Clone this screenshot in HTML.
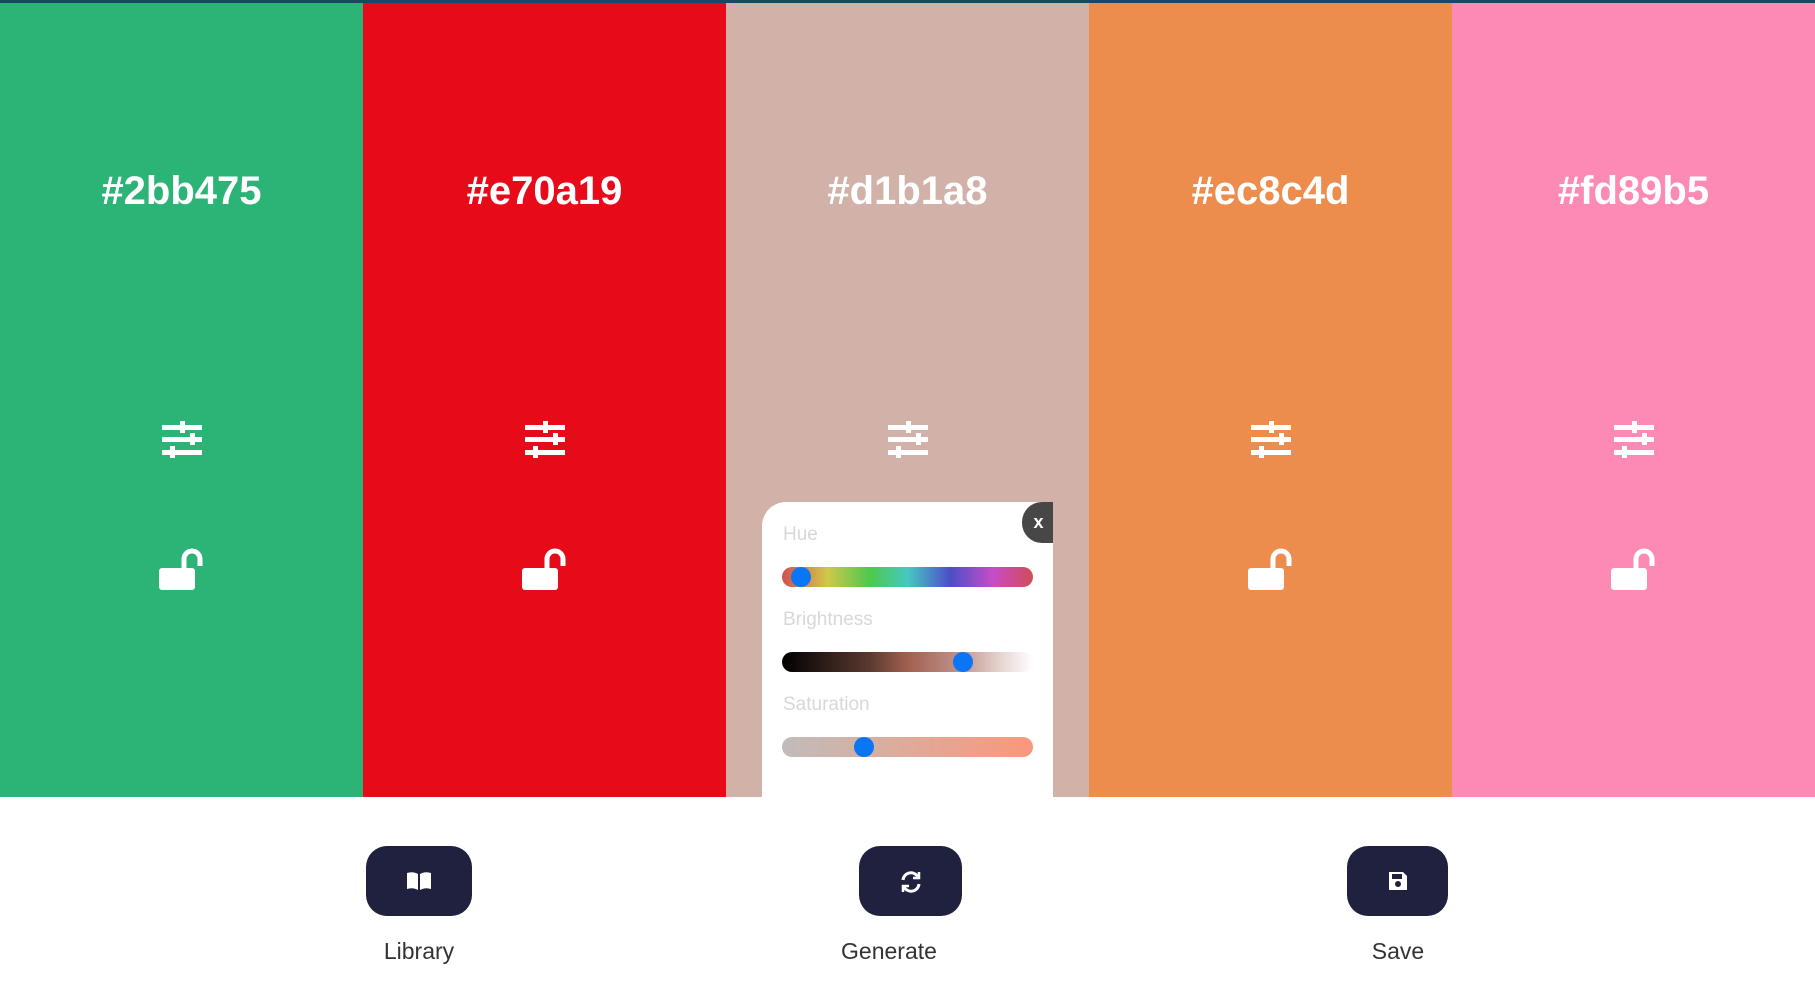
<!DOCTYPE html>
<html><head><meta charset="utf-8"><style>
*{margin:0;padding:0;box-sizing:border-box}
body{width:1815px;height:994px;background:#fff;font-family:"Liberation Sans",sans-serif;position:relative;overflow:hidden}
.top{position:absolute;left:0;top:0;width:1815px;height:3px;background:#164a63}
.col{position:absolute;top:3px;height:794px;width:363px}
.hex{position:absolute;top:169px;width:100%;text-align:center;color:#fff;font-weight:bold;font-size:40px}
.sl{position:absolute;left:161px;top:420px}
.lk{position:absolute;left:158px;top:547px}
.pop{position:absolute;left:762px;top:502px;width:291px;height:295px;background:#fff;border-top-left-radius:24px}
.x{position:absolute;left:1022px;top:502px;width:31px;height:41px;background:#474747;border-radius:20px 0 0 20px;color:#fff;font-weight:bold;font-size:18px;line-height:41px;text-align:center;padding-left:2px}
.lab{position:absolute;left:783px;color:#d8d8d8;font-size:19px}
.bar{position:absolute;left:782px;width:251px;height:20px;border-radius:10px}
.th{position:absolute;width:20px;height:20px;border-radius:50%;background:#0a76f5}
.btn{position:absolute;top:846px;height:70px;background:#20213f;border-radius:21px}
.bl{position:absolute;top:938px;color:#333;font-size:23px;text-align:center}
</style></head><body>
<div class="top"></div>
<div class="col" style="left:0;background:#2bb475"></div>
<div class="col" style="left:363px;background:#e70a19"></div>
<div class="col" style="left:726px;background:#d1b1a8"></div>
<div class="col" style="left:1089px;background:#ec8c4d"></div>
<div class="col" style="left:1452px;width:363px;background:#fd89b5"></div>
<div class="hex" style="left:0;width:363px">#2bb475</div>
<div class="hex" style="left:363px;width:363px">#e70a19</div>
<div class="hex" style="left:726px;width:363px">#d1b1a8</div>
<div class="hex" style="left:1089px;width:363px">#ec8c4d</div>
<div class="hex" style="left:1452px;width:363px">#fd89b5</div>
<svg width="0" height="0" style="position:absolute"><defs>
<g id="sl" fill="#fff"><rect x="1" y="5" width="40" height="5"/><rect x="1" y="17" width="40" height="5"/><rect x="1" y="30" width="40" height="5"/><rect x="19" y="1" width="5" height="12"/><rect x="29" y="13" width="5" height="12"/><rect x="9" y="26" width="5" height="12"/></g>
<g id="lk"><rect x="1" y="21" width="36" height="22" rx="3" fill="#fff"/><path d="M26 22 V12 a8 8 0 0 1 16 0 V19" fill="none" stroke="#fff" stroke-width="5"/></g>
</defs></svg>
<svg class="sl" style="left:161px" width="44" height="40"><use href="#sl"/></svg>
<svg class="sl" style="left:524px" width="44" height="40"><use href="#sl"/></svg>
<svg class="sl" style="left:887px" width="44" height="40"><use href="#sl"/></svg>
<svg class="sl" style="left:1250px" width="44" height="40"><use href="#sl"/></svg>
<svg class="sl" style="left:1613px" width="44" height="40"><use href="#sl"/></svg>
<svg class="lk" style="left:158px" width="46" height="46"><use href="#lk"/></svg>
<svg class="lk" style="left:521px" width="46" height="46"><use href="#lk"/></svg>
<svg class="lk" style="left:1247px" width="46" height="46"><use href="#lk"/></svg>
<svg class="lk" style="left:1610px" width="46" height="46"><use href="#lk"/></svg>
<div class="pop"></div>
<div class="x">x</div>
<div class="lab" style="top:524px">Hue</div>
<div class="bar" style="top:567px;background:linear-gradient(90deg,#d05050,#d0c84a 18%,#4cc94c 35%,#48c8c0 50%,#4c4ec8 67%,#c84cc8 84%,#d04c58)"></div>
<div class="th" style="left:791px;top:567px"></div>
<div class="lab" style="top:609px">Brightness</div>
<div class="bar" style="top:652px;background:linear-gradient(90deg,#000,#5a3a30 35%,#a06050 50%,#c09088 70%,#e8d8d4 88%,#fff)"></div>
<div class="th" style="left:953px;top:652px"></div>
<div class="lab" style="top:694px">Saturation</div>
<div class="bar" style="top:737px;background:linear-gradient(90deg,#c0bcbb,#dcac9c 45%,#fa977c)"></div>
<div class="th" style="left:854px;top:737px"></div>
<div class="btn" style="left:366px;width:106px"></div>
<div class="btn" style="left:859px;width:103px"></div>
<div class="btn" style="left:1347px;width:101px"></div>
<svg style="position:absolute;left:405px;top:869px" width="28" height="24" viewBox="0 0 28 24"><path d="M2 4 Q8 2 13 5 V21 Q8 18 2 20Z M15 5 Q20 2 26 4 V20 Q20 18 15 21Z" fill="#fff"/></svg>
<svg style="position:absolute;left:898px;top:869px" width="26" height="26" viewBox="0 0 26 26" fill="none" stroke="#fff" stroke-width="3"><path d="M5 11 A8 8 0 0 1 20 8"/><path d="M21 15 A8 8 0 0 1 6 18"/><path d="M21 3 V9 H15" stroke-width="2.5"/><path d="M5 23 V17 H11" stroke-width="2.5"/></svg>
<svg style="position:absolute;left:1387px;top:870px" width="22" height="22" viewBox="0 0 22 22"><path d="M2 2 H16 L20 6 V20 H2Z" fill="#fff"/><rect x="5" y="4" width="10" height="5" fill="#20213f"/><circle cx="11" cy="14" r="3" fill="#20213f"/></svg>
<div class="bl" style="left:319px;width:200px">Library</div>
<div class="bl" style="left:789px;width:200px">Generate</div>
<div class="bl" style="left:1298px;width:200px">Save</div>
</body></html>
